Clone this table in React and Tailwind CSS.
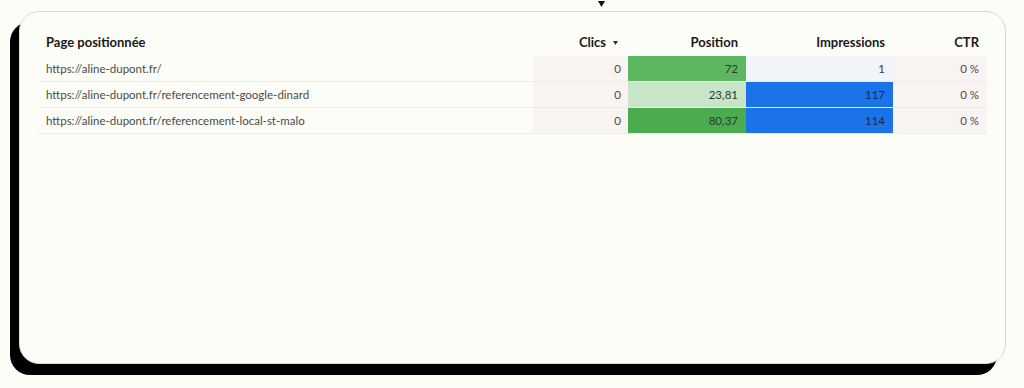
import React from "react";

const rows = [
  {
    page: "https://aline-dupont.fr/",
    clics: "0",
    position: "72",
    posBg: "bg-[#5db761]",
    impressions: "1",
    impBg: "bg-[#f1f4f8]",
    impText: "text-[#3c3c3c]",
    ctr: "0 %",
  },
  {
    page: "https://aline-dupont.fr/referencement-google-dinard",
    clics: "0",
    position: "23,81",
    posBg: "bg-[#c6e6c7]",
    impressions: "117",
    impBg: "bg-[#1a73e8]",
    impText: "text-[#1b2a4a]",
    ctr: "0 %",
  },
  {
    page: "https://aline-dupont.fr/referencement-local-st-malo",
    clics: "0",
    position: "80,37",
    posBg: "bg-[#4aac4e]",
    impressions: "114",
    impBg: "bg-[#1a73e8]",
    impText: "text-[#1b2a4a]",
    ctr: "0 %",
  },
];

const cols = "grid grid-cols-[495px_95px_118px_147px_94px]";

export default function App() {
  return (
    <div
      className="w-[1024px] h-[388px] bg-[#fdfdf8] flex flex-col text-[#222]"
      style={{ fontFamily: "Lato, 'Noto Sans', sans-serif" }}
    >
      {/* drop-down marker above the card */}
      <div className="h-[11px] pl-[598px] flex items-start">
        <svg width="7" height="6" viewBox="0 0 7 6" className="mt-[1px]">
          <path d="M0 0 H7 L3.5 6 Z" fill="#111" />
        </svg>
      </div>

      <div className="ml-[19px] w-[987px] h-[353px] rounded-[20px] border border-[#d8d8d4] bg-[#fdfdf8] shadow-[-9px_11px_0_0_#000] px-[18px] pt-[18px]">
        {/* header */}
        <div className={`${cols} h-[26px] items-center text-[13px] font-bold text-[#1a1a1a]`}>
          <div className="pl-[8px]">Page positionnée</div>
          <div className="flex items-center justify-end gap-[7px] pr-[10px]">
            <span>Clics</span>
            <svg width="5" height="4" viewBox="0 0 5 4">
              <path d="M0 0 H5 L2.5 4 Z" fill="#333" />
            </svg>
          </div>
          <div className="text-right pr-[8px]">Position</div>
          <div className="text-right pr-[8px]">Impressions</div>
          <div className="text-right pr-[8px]">CTR</div>
        </div>

        {/* body */}
        {rows.map((r) => (
          <div
            key={r.page}
            className={`${cols} h-[26px] border-b border-[#ececea] text-[11.5px] text-[#4a4a4a]`}
          >
            <div className="pl-[8px] flex items-center">{r.page}</div>
            <div className="bg-[#f9f4f1] flex items-center justify-end pr-[7px]">{r.clics}</div>
            <div className={`${r.posBg} flex items-center justify-end pr-[8px] text-[#2f3a2f]`}>
              {r.position}
            </div>
            <div className={`${r.impBg} ${r.impText} flex items-center justify-end pr-[8px]`}>
              {r.impressions}
            </div>
            <div className="bg-[#f9f4f1] flex items-center justify-end pr-[8px]">{r.ctr}</div>
          </div>
        ))}
      </div>
    </div>
  );
}
